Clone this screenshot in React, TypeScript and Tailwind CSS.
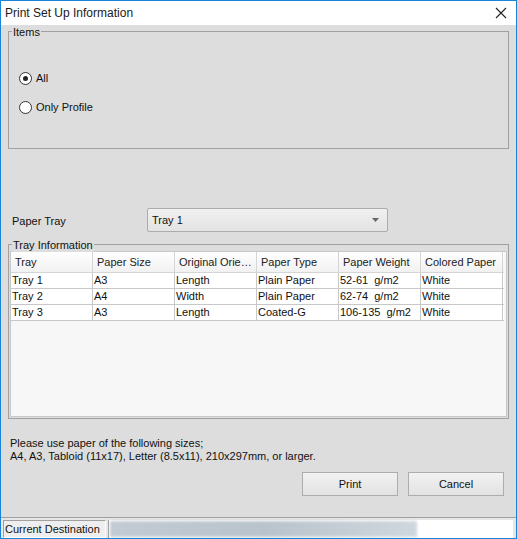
import React from "react";

const cols = ["Tray", "Paper Size", "Original Orie…", "Paper Type", "Paper Weight", "Colored Paper"];
const rows = [
  ["Tray 1", "A3", "Length", "Plain Paper", "52-61  g/m2", "White"],
  ["Tray 2", "A4", "Width", "Plain Paper", "62-74  g/m2", "White"],
  ["Tray 3", "A3", "Length", "Coated-G", "106-135  g/m2", "White"],
];

function Radio({ checked, label }: { checked?: boolean; label: string }) {
  return (
    <div className="flex items-center gap-[4px] h-[14px]">
      <div className="w-[13px] h-[13px] rounded-full border border-[#333] bg-white flex items-center justify-center">
        {checked && <div className="w-[5px] h-[5px] rounded-full bg-[#222]" />}
      </div>
      <span>{label}</span>
    </div>
  );
}

function Btn({ label }: { label: string }) {
  return (
    <div className="w-[96px] h-[24px] border border-[#adadad] bg-gradient-to-b from-[#f2f2f2] to-[#e2e2e2] flex items-center justify-center text-[#111]">
      {label}
    </div>
  );
}

export default function App() {
  return (
    <div
      className="w-[517px] h-[539px] border border-[#1883d7] bg-[#dddddd] flex flex-col text-[11px] text-[#111] overflow-hidden whitespace-nowrap"
      style={{ fontFamily: '"Liberation Sans", Arial, sans-serif' }}
    >
      {/* Title bar */}
      <div className="h-[24px] bg-white flex items-center justify-between pl-[4px] pr-[9px] shrink-0">
        <span className="text-[12px] text-[#1a1a1a]">Print Set Up Information</span>
        <svg width="12" height="12" viewBox="0 0 12 12">
          <path d="M1 1 L11 11 M11 1 L1 11" stroke="#222" strokeWidth="1.1" />
        </svg>
      </div>

      <div className="flex flex-col flex-1 px-[7px]">
        {/* Items group */}
        <div className="relative mt-[6px] h-[118px] border border-[#a0a0a0] flex flex-col pl-[10px] pt-[39px] gap-[15px]">
          <span className="absolute left-[3px] top-[-6px] bg-[#dddddd] px-[1px] leading-[13px]">Items</span>
          <Radio checked label="All" />
          <Radio label="Only Profile" />
        </div>

        {/* Paper Tray */}
        <div className="mt-[59px] h-[24px] flex items-center">
          <span className="w-[139px] pl-[4px] pt-[3px]">Paper Tray</span>
          <div className="w-[241px] h-[24px] border border-[#acacac] rounded-[2px] bg-gradient-to-b from-[#f0f0f0] to-[#e3e3e3] flex items-center justify-between pl-[4px] pr-[8px]">
            <span>Tray 1</span>
            <svg width="7" height="4" viewBox="0 0 7 4">
              <path d="M0 0 H7 L3.5 4 Z" fill="#666" />
            </svg>
          </div>
        </div>

        {/* Tray Information group */}
        <div className="relative mt-[12px] h-[175px] border border-[#a0a0a0] px-[1px] pt-[6px] pb-[1px]">
          <span className="absolute left-[3px] top-[-6px] bg-[#dddddd] px-[1px] leading-[13px] z-10">Tray Information</span>
          <div className="h-full bg-[#f7f7f7] border border-[#c8c8c8] pr-[2px] flex flex-col">
            <div className="flex h-[21px] bg-gradient-to-b from-white to-[#f1f1f1] border-b border-[#d5d5d5]">
              {cols.map((c) => (
                <div key={c} className="w-[82px] shrink-0 border-r border-[#d5d5d5] flex items-center pl-[4px] text-[#222]">
                  {c}
                </div>
              ))}
            </div>
            {rows.map((r, i) => (
              <div key={i} className="flex h-[16px] bg-white border-b border-[#c8c8c8]">
                {r.map((c, j) => (
                  <div key={j} className="w-[82px] shrink-0 border-r border-[#c8c8c8] flex items-center pl-[1px] whitespace-pre leading-[15px]">
                    {c}
                  </div>
                ))}
              </div>
            ))}
          </div>
        </div>

        {/* Note */}
        <div className="mt-[18px] pl-[2px] leading-[13px]">
          <div>Please use paper of the following sizes;</div>
          <div>A4, A3, Tabloid (11x17), Letter (8.5x11), 210x297mm, or larger.</div>
        </div>

        {/* Buttons */}
        <div className="mt-[9px] flex justify-end gap-[10px] pr-[5px]">
          <Btn label="Print" />
          <Btn label="Cancel" />
        </div>
      </div>

      {/* Status bar */}
      <div className="h-[21px] border-t border-[#a0a0a0] bg-[#e6e6e6] flex items-stretch pt-[2px] pl-[2px] pr-[3px] gap-[2px] shrink-0">
        <div className="w-[103px] border border-l-[#a0a0a0] border-t-[#a0a0a0] border-r-white border-b-white flex items-center pl-[1px] bg-[#eeeeee]">
          Current Destination
        </div>
        <div className="flex-1 bg-white flex items-center pl-[1px] border-l border-[#a0a0a0]">
          <div className="w-[307px] h-[16px] bg-gradient-to-r from-[#c2cbd3] via-[#b9c3cb] to-[#cfd7de] blur-[1.5px]" />
        </div>
      </div>
    </div>
  );
}
